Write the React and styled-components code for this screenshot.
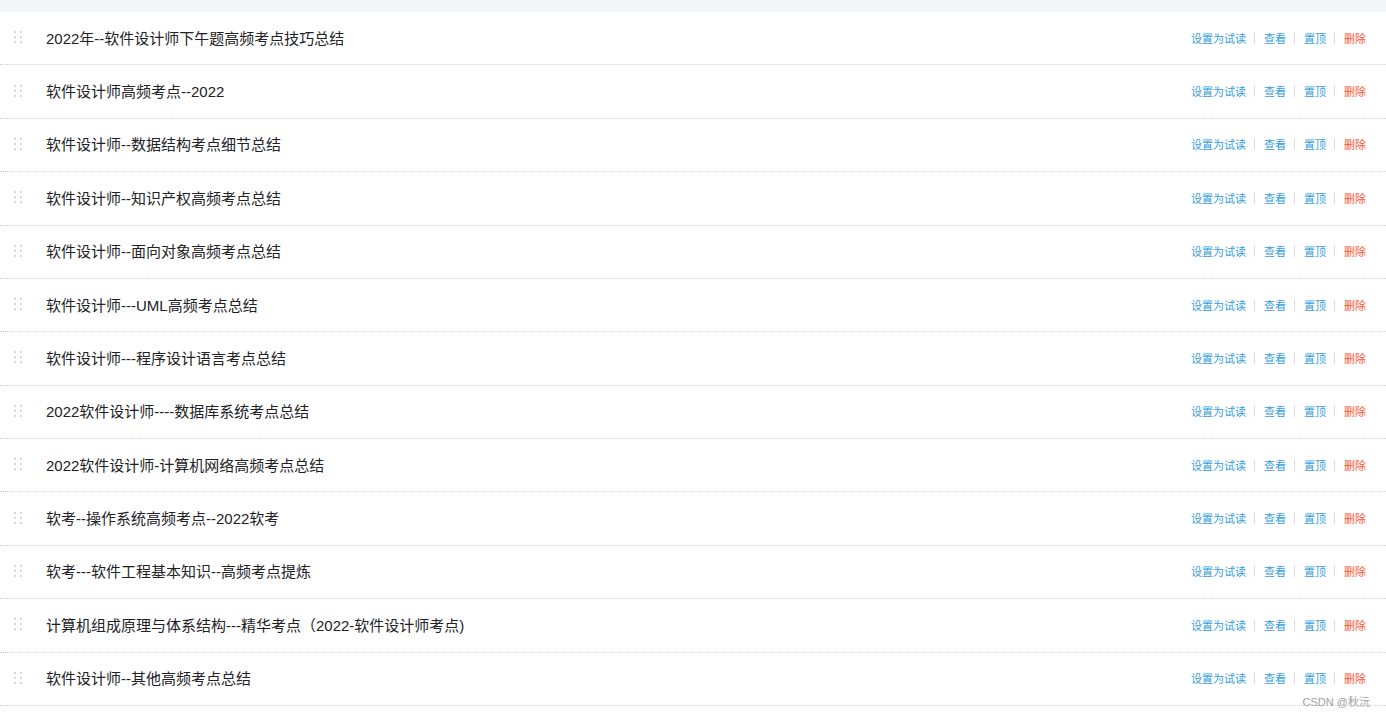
import React from "react";
import styled, { createGlobalStyle } from "styled-components";

const Global = createGlobalStyle`
  html, body { margin: 0; padding: 0; background: #fff; }
  body { font-family: "Liberation Sans", "Noto Sans CJK SC", sans-serif; }
`;

const Page = styled.div`
  position: relative;
  width: 1386px;
  height: 717px;
  overflow: hidden;
  background: #fff;
`;

const TopBand = styled.div`
  height: 12px;
  background: #f3f5f8;
`;

const List = styled.ul`
  list-style: none;
  margin: 0;
  padding: 0;
`;

const Row = styled.li`
  display: flex;
  align-items: center;
  height: 52.38px;
  box-sizing: content-box;
  border-bottom: 1px dotted #cfcfcf;
  padding: 0 20px 0 14px;
`;

const Handle = styled.span`
  display: grid;
  grid-template-columns: 2px 2px;
  grid-auto-rows: 2px;
  column-gap: 4px;
  row-gap: 3px;
  width: 8px;
  margin: 0 24px 2px 0;
  span { background: #d6d6d6; }
`;

const Title = styled.span`
  flex: 1;
  font-size: 15px;
  color: #222226;
  white-space: nowrap;
  margin-bottom: 2px;
`;

const Actions = styled.div`
  display: flex;
  align-items: center;
  font-size: 11px;
  font-family: "Noto Sans CJK SC", sans-serif;
  margin-bottom: 1px;
`;

const Action = styled.a`
  color: ${(p) => (p.$danger ? "#fc5531" : "#349edf")};
  cursor: pointer;
`;

const Sep = styled.span`
  width: 1px;
  height: 12px;
  background: #dcdcdc;
  margin: 0 9px 0 8px;
`;

const Watermark = styled.div`
  position: absolute;
  right: 16px;
  bottom: 8px;
  font-size: 11px;
  color: #a0a0a0;
  font-family: "Liberation Sans", "Noto Sans CJK SC", sans-serif;
`;

const titles = [
  "2022年--软件设计师下午题高频考点技巧总结",
  "软件设计师高频考点--2022",
  "软件设计师--数据结构考点细节总结",
  "软件设计师--知识产权高频考点总结",
  "软件设计师--面向对象高频考点总结",
  "软件设计师---UML高频考点总结",
  "软件设计师---程序设计语言考点总结",
  "2022软件设计师----数据库系统考点总结",
  "2022软件设计师-计算机网络高频考点总结",
  "软考--操作系统高频考点--2022软考",
  "软考---软件工程基本知识--高频考点提炼",
  "计算机组成原理与体系结构---精华考点（2022-软件设计师考点)",
  "软件设计师--其他高频考点总结",
];

export default function App() {
  return (
    <Page>
      <Global />
      <TopBand />
      <List>
        {titles.map((t) => (
          <Row key={t}>
            <Handle>
              {Array.from({ length: 6 }).map((_, i) => (
                <span key={i} />
              ))}
            </Handle>
            <Title>{t}</Title>
            <Actions>
              <Action>设置为试读</Action>
              <Sep />
              <Action>查看</Action>
              <Sep />
              <Action>置顶</Action>
              <Sep />
              <Action $danger>删除</Action>
            </Actions>
          </Row>
        ))}
      </List>
      <Watermark>CSDN @秋沅</Watermark>
    </Page>
  );
}
